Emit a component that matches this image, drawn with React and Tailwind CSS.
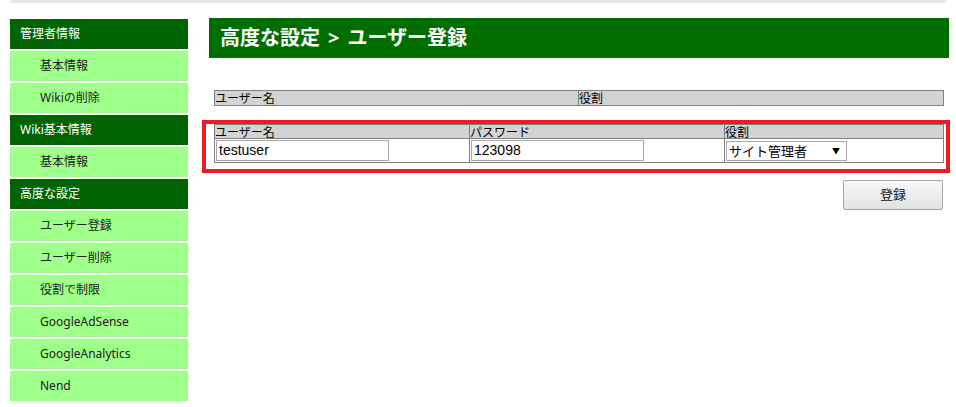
const menu = [
	{ label: "管理者情報", head: true },
	{ label: "基本情報" },
	{ label: "Wikiの削除" },
	{ label: "Wiki基本情報", head: true },
	{ label: "基本情報" },
	{ label: "高度な設定", head: true },
	{ label: "ユーザー登録" },
	{ label: "ユーザー削除" },
	{ label: "役割で制限" },
	{ label: "GoogleAdSense" },
	{ label: "GoogleAnalytics" },
	{ label: "Nend" },
];

export default function App() {
	return (
		<div className="relative w-[956px] h-[407px] bg-white font-['Noto_Sans','Noto_Sans_CJK_JP',sans-serif]">
			<div className="mx-[10px] h-[3px] bg-[#e6e6e6]" />
			<div className="flex pl-[10px] pt-[15px]">
				{/* sidebar */}
				<aside className="mt-[1px] w-[178px] flex flex-col gap-[2px]">
					{menu.map((m, i) =>
						m.head ? (
							<div
								key={i}
								className="h-[30px] flex items-center pl-[10px] bg-[#006400] text-white text-[12px]"
							>
								{m.label}
							</div>
						) : (
							<div
								key={i}
								className="h-[30px] flex items-center pl-[30px] bg-[#9eff8a] text-[#222] text-[12px]"
							>
								{m.label}
							</div>
						)
					)}
				</aside>

				{/* main */}
				<main className="ml-[21px] w-[740px]">
					<div className="h-[40px] flex items-center px-[11px] bg-[#006f00] text-white text-[20px] font-bold">
						<span>高度な設定</span>
						<span className="mx-[8px]">&gt;</span>
						<span>ユーザー登録</span>
					</div>

					<table className="mt-[32px] ml-[5px] w-[730px] border-collapse border border-[#808080] text-[12px] leading-[14px] font-['Noto_Sans_CJK_JP',sans-serif]">
						<tbody>
							<tr className="bg-[#d3d3d3]">
								<td className="w-[364px] p-0 border border-[#808080] text-left">ユーザー名</td>
								<td className="p-0 border border-[#808080] text-left">役割</td>
							</tr>
						</tbody>
					</table>

					<table className="mt-[18px] ml-[5px] w-[730px] border-collapse border border-[#808080] text-[12px] font-['Noto_Sans_CJK_JP',sans-serif]">
						<tbody>
							<tr className="bg-[#d3d3d3] leading-[13px]">
								<td className="w-[255px] p-0 border border-[#808080]">ユーザー名</td>
								<td className="w-[255px] p-0 border border-[#808080]">パスワード</td>
								<td className="p-0 border border-[#808080]">役割</td>
							</tr>
							<tr>
								<td className="p-[1px] border border-[#808080]">
									<div className="w-[173px] h-[21px] border border-[#a9a9a9] px-[2px] flex items-center text-[14px] font-['Liberation_Sans',sans-serif]">
										testuser
									</div>
								</td>
								<td className="p-[1px] border border-[#808080]">
									<div className="w-[173px] h-[21px] border border-[#a9a9a9] px-[2px] flex items-center text-[14px] font-['Liberation_Sans',sans-serif]">
										123098
									</div>
								</td>
								<td className="p-[1px] border border-[#808080]">
									<div className="w-[121px] h-[20px] border border-[#a9a9a9] pl-[2px] pr-[6px] flex items-center justify-between text-[13px]">
										<span>サイト管理者</span>
										<span className="text-[8px]">▼</span>
									</div>
								</td>
							</tr>
						</tbody>
					</table>

					<div className="mt-[17px] flex justify-end pr-[6px]">
						<button className="w-[100px] h-[30px] border border-[#a6a6a6] rounded-[2px] bg-gradient-to-b from-[#f8f8f8] to-[#e2e2e2] text-[13px] text-[#111]">
							登録
						</button>
					</div>
				</main>
			</div>

			{/* red annotation frame */}
			<div className="absolute left-[202px] top-[120px] w-[748px] h-[53px] border-4 border-[#ed1c24]" />
		</div>
	);
}
